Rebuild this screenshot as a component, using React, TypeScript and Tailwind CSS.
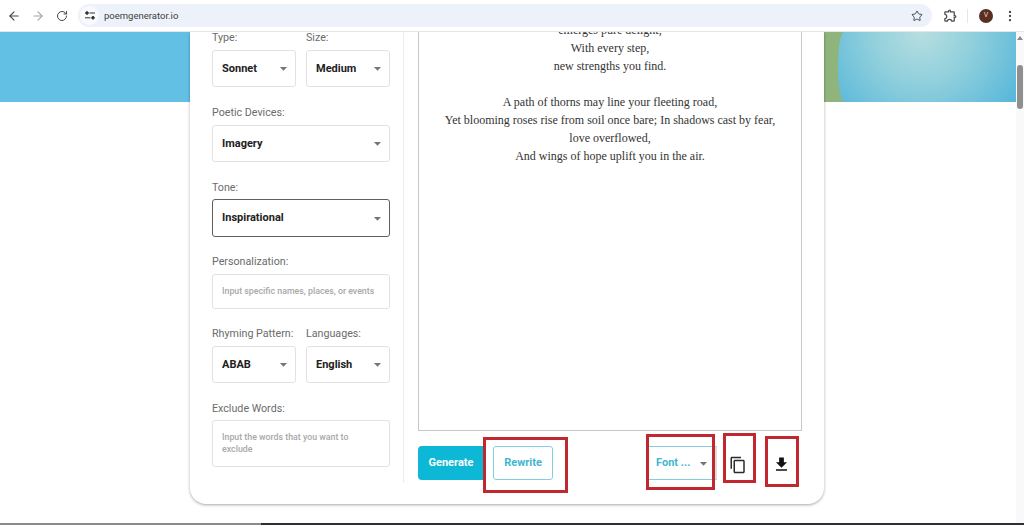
import { ArrowLeft, ArrowRight, RotateCw, Star, EllipsisVertical } from "lucide-react";
import { MdArrowDropDown, MdContentCopy, MdFileDownload, MdOutlineExtension } from "react-icons/md";

const labelCls = "block text-[10.7px] leading-[14px] text-[#6b6b6b] mb-[5px]";

const Select = ({ value, dark, className = "" }: { value: string; dark?: boolean; className?: string }) => (
  <div
    className={`flex items-center justify-between pl-[9px] pr-[3px] rounded-[3px] border text-[11px] font-bold text-[#212121] ${
      dark ? "border-[#5f5f5f] h-[38px]" : "border-[#e2e2e2] h-[37px]"
    } ${className}`}
  >
    <span className="pt-[1px]">{value}</span>
    <MdArrowDropDown size={17} className="text-[#757575]" />
  </div>
);

const RedBox = ({ className }: { className: string }) => (
  <div className={`absolute border-[3px] border-[#c1272f] ${className}`} />
);

const Toolbar = () => (
  <div className="flex items-center h-[34px] mt-[15px] pr-[9px]">
    <button className="w-[66px] h-full pt-[1px] bg-[#0cb8d6] text-white text-[11px] font-bold rounded-l-[4px]">Generate</button>
    <button className="w-[60px] h-full pt-[1px] ml-[9px] border border-[#84cfdf] rounded-[3px] bg-white text-[#3fb6d0] text-[11px] font-bold">
      Rewrite
    </button>
    <div className="ml-auto w-[68px] h-full flex items-center justify-between pl-[7px] pr-[3px] border-y border-[#84cfdf] border-r-2 border-r-[#dddddd] text-[#3fb6d0] text-[11px] font-bold">
      <span className="pt-[1px]">Font ...</span>
      <MdArrowDropDown size={17} className="text-[#757575]" />
    </div>
    <button className="ml-[9px] mt-[3px] w-[24px] flex justify-center text-[#2b2b2b]">
      <MdContentCopy size={18} />
    </button>
    <button className="ml-[19px] mt-[3px] w-[24px] flex justify-center text-[#111111]">
      <MdFileDownload size={19} />
    </button>
  </div>
);

export default function App() {
  return (
    <div className="h-[525px] w-[1024px] overflow-hidden flex flex-col bg-white font-['Roboto',sans-serif]">
      {/* browser toolbar */}
      <header className="h-8 shrink-0 flex items-center bg-white border-b border-[#e4e6ea] z-10 font-['Roboto',sans-serif]">
        <ArrowLeft size={14} className="ml-[7px] text-[#474747]" />
        <ArrowRight size={14} className="ml-[10px] text-[#a6a6a6]" />
        <RotateCw size={12} className="ml-[11px] text-[#474747]" />
        <div className="ml-[10px] w-[854px] h-[23px] rounded-full bg-[#edf2fa] flex items-center">
          <div className="ml-[2px] w-[19px] h-[19px] rounded-full bg-[#f8fafd] flex items-center justify-center">
            <svg width="10" height="9" viewBox="0 0 10 9" fill="none" stroke="#333333" strokeWidth="1">
              <circle cx="2" cy="2" r="1.3" fill="#333333" />
              <path d="M4.5 2H10M0 6.8h5.5" />
              <circle cx="8" cy="6.8" r="1.3" fill="#333333" />
            </svg>
          </div>
          <span className="ml-[5px] pt-[1px] text-[9.5px] text-[#3c4043]">poemgenerator.io</span>
          <Star size={12} strokeWidth={2} className="ml-auto mr-[9px] text-[#3f4a5a]" />
        </div>
        <MdOutlineExtension size={15} className="ml-[11px] text-[#4a4a4a]" />
        <div className="ml-[9px] w-px h-[14px] bg-[#e6e6e6]" />
        <div className="ml-[11px] w-[14px] h-[14px] rounded-full bg-[#5a2f22] text-[#e8d8cf] text-[7px] flex items-center justify-center">V</div>
        <EllipsisVertical size={14} className="ml-[10px] text-[#474747]" />
      </header>

      <div className="flex-1 flex min-h-0">
        <main className="relative flex-1 overflow-hidden">
          {/* hero band behind the card */}
          <div className="absolute inset-x-0 top-0 h-[70px] flex">
            <div className="w-[200px] bg-[#62c0e4]" />
            <div className="flex-1" />
            <div className="w-[192px] bg-[#8fb47c]">
              <div className="ml-[14px] h-full rounded-l-[6px_35px] bg-[radial-gradient(circle_at_84px_0px,#b7dee0_0%,#8fcfdc_45%,#55b6da_100%)]" />
            </div>
          </div>

          {/* card */}
          <section className="relative ml-[190px] w-[634px] h-[472px] flex bg-white rounded-b-[16px] shadow-[0_1px_3px_rgba(0,0,0,0.35)]">
            <aside className="w-[214px] h-[451px] pl-[22px] pr-[13px] border-r border-[#ececec] shrink-0">
              <div className="-mt-[1px] grid grid-cols-[84px_84px] gap-x-[10px]">
                <div>
                  <label className={labelCls}>Type:</label>
                  <Select value="Sonnet" />
                </div>
                <div>
                  <label className={labelCls}>Size:</label>
                  <Select value="Medium" />
                </div>
              </div>
              <div className="mt-[19px]">
                <label className={labelCls}>Poetic Devices:</label>
                <Select value="Imagery" />
              </div>
              <div className="mt-[19px]">
                <label className={`${labelCls} !mb-[4px]`}>Tone:</label>
                <Select value="Inspirational" dark />
              </div>
              <div className="mt-[18px]">
                <label className={labelCls}>Personalization:</label>
                <div className="h-[35px] flex items-center pl-[9px] border border-[#e2e2e2] rounded-[3px] text-[8.8px] font-medium text-[#a8a8a8]">
                  Input specific names, places, or events
                </div>
              </div>
              <div className="mt-[18px] grid grid-cols-[84px_84px] gap-x-[10px]">
                <div>
                  <label className={labelCls}>Rhyming Pattern:</label>
                  <Select value="ABAB" />
                </div>
                <div>
                  <label className={labelCls}>Languages:</label>
                  <Select value="English" />
                </div>
              </div>
              <div className="mt-[19px]">
                <label className={`${labelCls} !mb-[4px]`}>Exclude Words:</label>
                <div className="h-[47px] pt-[10px] pl-[9px] pr-[20px] border border-[#e2e2e2] rounded-[3px] text-[8.8px] leading-[12px] font-medium text-[#a8a8a8]">
                  Input the words that you want to exclude
                </div>
              </div>
            </aside>

            <div className="flex-1 pl-[14px] pr-[22px] flex flex-col">
              <div className="h-[399px] overflow-hidden border-x border-b border-[#c8c8c8] px-[20px] text-center text-[#333333] font-['Liberation_Serif',serif] text-[12px] leading-[18px]">
                <p className="-mt-[11px]">emerges pure delight,</p>
                <p>With every step,</p>
                <p>new strengths you find.</p>
                <p className="mt-[18px]">A path of thorns may line your fleeting road,</p>
                <p>Yet blooming roses rise from soil once bare; In shadows cast by fear, love overflowed,</p>
                <p>And wings of hope uplift you in the air.</p>
              </div>
              <Toolbar />
            </div>

            {/* annotation rectangles drawn over the screenshot */}
            <RedBox className="left-[293px] top-[405px] w-[85px] h-[56px]" />
            <RedBox className="left-[456px] top-[402px] w-[69px] h-[56px]" />
            <RedBox className="left-[533px] top-[401px] w-[33px] h-[50px]" />
            <RedBox className="left-[575px] top-[404px] w-[34px] h-[51px]" />
          </section>
        </main>

        {/* scrollbar */}
        <div className="w-2 shrink-0 bg-[#f9f9f9] flex flex-col items-center">
          <div className="mt-[4px] w-0 h-0 border-x-[3px] border-x-transparent border-b-[4px] border-b-[#8a8a8a]" />
          <div className="mt-[25px] w-[6px] h-[44px] rounded-full bg-[#8f8f8f]" />
        </div>
      </div>

      {/* edge of the taskbar */}
      <div className="h-[2px] shrink-0 flex">
        <div className="w-[261px] bg-[#8a8a8a]" />
        <div className="flex-1 bg-[#2a3036]" />
      </div>
    </div>
  );
}
